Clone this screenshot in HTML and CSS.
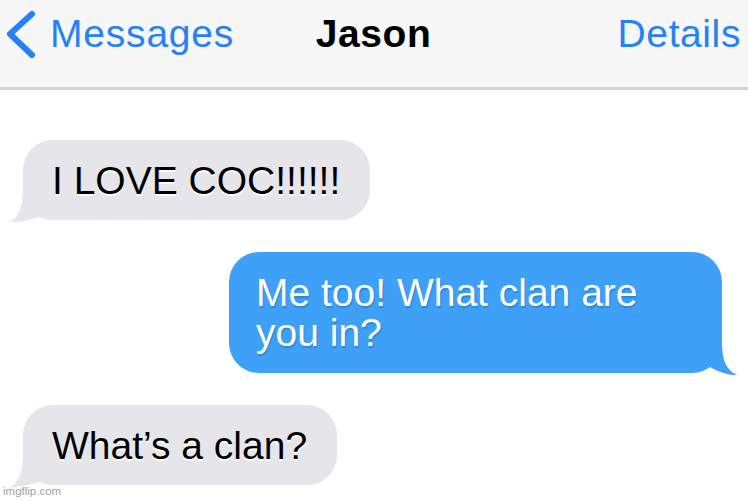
FILE: index.html
```html
<!DOCTYPE html>
<html lang="en">
  <head>
    <meta charset="utf-8">
    <title>Jason</title>
    <meta name="viewport" content="width=device-width, initial-scale=1">
    <link rel="stylesheet" href="styles.css">
  </head>
  <body>
    <div class="Nav-Bar">
      <div class="Nav-Back">
        <svg class="Back-Icon" width="30" height="50" viewBox="0 0 30 50">
          <polyline points="26,5 4,25 26,46" fill="none" stroke="#2581f7" stroke-width="6" stroke-linecap="round" stroke-linejoin="round"/>
        </svg>
        <span>Messages</span>
      </div>
      <div class="Nav-Title">Jason</div>
      <div class="Nav-Details">Details</div>
    </div>

    <div class="Chat-Container">
      <div class="Bubble Them">
        I LOVE COC!!!!!!
        <svg class="Tail" width="40" height="34" viewBox="0 0 40 34">
          <path d="M14 0 C14 18 10 28 1 33 C8 33.5 20 31 31 28 L31 0 Z" fill="#e5e5ea"/>
        </svg>
      </div>
      <div class="Bubble Me">
        Me too! What clan are you in?
        <svg class="Tail" width="40" height="34" viewBox="0 0 40 34">
          <path d="M24 0 C24 18 28 28 39 33 C32 33.5 20 30 12 25 L12 0 Z" fill="#3ea0f7"/>
        </svg>
      </div>
      <div class="Bubble Them">
        What’s a clan?
        <svg class="Tail" width="40" height="34" viewBox="0 0 40 34">
          <path d="M14 0 C14 18 10 28 1 33 C8 33.5 20 31 31 28 L31 0 Z" fill="#e5e5ea"/>
        </svg>
      </div>
    </div>

    <div class="Watermark">imgflip.com</div>
  </body>
</html>
```

FILE: styles.css
```css
html, body {
  margin: 0;
  padding: 0;
}

body {
  position: relative;
  width: 748px;
  height: 500px;
  overflow: hidden;
  background: #ffffff;
  font-family: 'Liberation Sans', Arial, sans-serif;
}

.Nav-Bar {
  display: grid;
  grid-template-columns: 1fr auto 1fr;
  align-items: center;
  height: 90px;
  box-sizing: border-box;
  padding: 8.5px 7px 28.5px 6px;
  background: #f7f7f7;
  border-bottom: 3px solid #d2d2d2;
  font-size: 39px;
  line-height: 44px;
  letter-spacing: 0.8px;
}

.Nav-Back {
  display: flex;
  align-items: center;
  gap: 14px;
  color: #2581f7;
}

.Back-Icon {
  display: block;
}

.Nav-Title {
  font-weight: bold;
  letter-spacing: 0.6px;
  color: #000000;
}

.Nav-Details {
  justify-self: end;
  color: #2581f7;
  letter-spacing: 0.6px;
}

.Chat-Container {
  display: flex;
  flex-direction: column;
  gap: 32px;
  padding: 50px 26px 0 23px;
}

.Bubble {
  position: relative;
  box-sizing: border-box;
  max-width: 493px;
  padding: 21px 30px 19px 29px;
  border-radius: 30px;
  font-size: 39px;
  line-height: 40px;
}

.Bubble .Tail {
  position: absolute;
  bottom: -3px;
}

.Them {
  align-self: flex-start;
  background: #e5e5ea;
  color: #000000;
  text-shadow: 0 2px 1px rgba(255, 255, 255, 0.9);
}

.Them .Tail {
  left: -14px;
}

.Me {
  align-self: flex-end;
  padding: 21px 30px 20px 27px;
  background: #3ea0f7;
  color: #ffffff;
  text-shadow: 1px 2px 1px rgba(20, 90, 170, 0.35);
}

.Me .Tail {
  right: -16px;
}

.Watermark {
  position: absolute;
  left: 3px;
  bottom: 3px;
  font-size: 11.5px;
  color: #a3a3a3;
}
```
